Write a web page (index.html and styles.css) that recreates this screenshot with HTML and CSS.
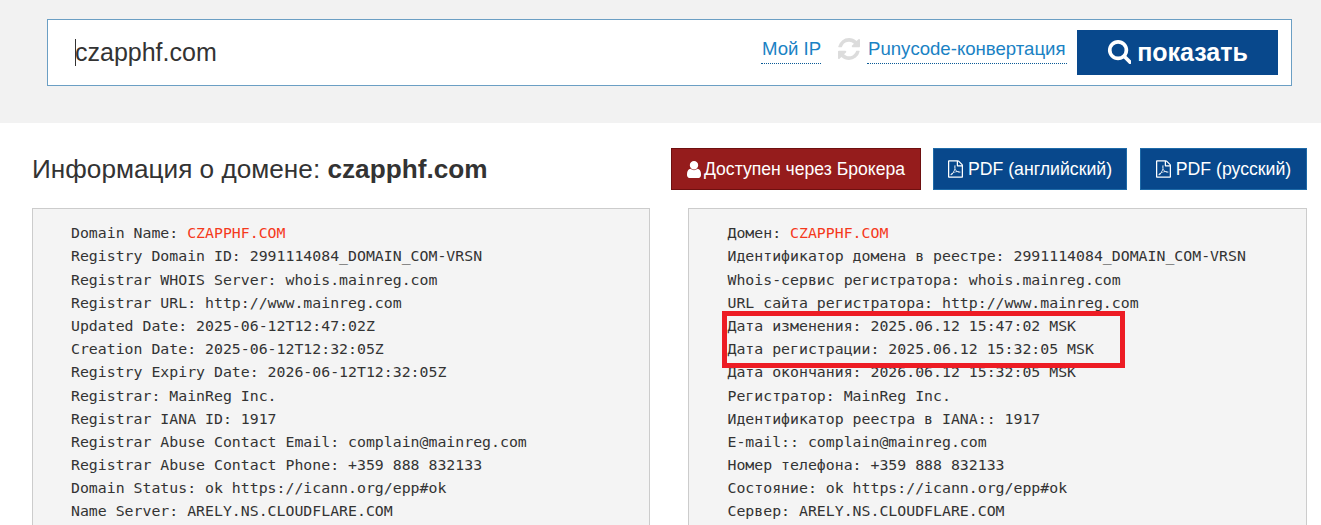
FILE: index.html
```html
<!DOCTYPE html>
<html lang="ru">
<head>
<meta charset="utf-8">
<title>Информация о домене</title>
<link rel="stylesheet" href="styles.css">
</head>
<body>
<header class="band">
  <form class="search">
    <div class="query"><span class="caret"></span>czapphf.com</div>
    <a class="tool myip">Мой IP</a>
    <svg class="refresh" viewBox="128 128 1536 1536" width="22" height="22" fill="#dcdcdc"><path d="M1639 1056q0 5-1 7-64 268-268 434.500t-478 166.500q-146 0-282.500-55t-243.500-157l-129 129q-19 19-45 19t-45-19-19-45v-448q0-26 19-45t45-19h448q26 0 45 19t19 45-19 45l-137 137q71 66 161 102t187 36q134 0 250-65t186-179q11-17 53-117 8-23 30-23h192q13 0 22.500 9.500t9.500 22.500zm25-800v448q0 26-19 45t-45 19h-448q-26 0-45-19t-19-45 19-45l138-138q-148-137-349-137-134 0-250 65t-186 179q-11 17-53 117-8 23-30 23h-199q-13 0-22.500-9.500t-9.500-22.500v-7q65-268 270-434.500t480-166.500q146 0 284 55.500t245 156.500l130-129q19-19 45-19t45 19 19 45z"/></svg>
    <a class="tool puny">Punycode-конвертация</a>
    <button class="show" type="button">
      <svg viewBox="0 128 1664 1664" width="24" height="24" fill="#fff"><path d="M1216 832q0-185-131.500-316.500t-316.500-131.500-316.500 131.500-131.500 316.500 131.500 316.500 316.500 131.500 316.500-131.500 131.500-316.500zm512 832q0 52-38 90t-90 38q-54 0-90-38l-343-342q-179 124-399 124-143 0-273.500-55.500t-225-150-150-225-55.500-273.500 55.500-273.500 150-225 225-150 273.500-55.500 273.500 55.500 225 150 150 225 55.500 273.500q0 220-124 399l343 343q37 37 37 90z"/></svg>
      показать
    </button>
  </form>
</header>
<main class="content">
  <div class="title-row">
    <h1 class="title">Информация о домене: <b>czapphf.com</b></h1>
    <div class="actions">
      <a class="btn broker">
        <svg class="btn-icon" viewBox="256 128 1280 1536" width="14" height="17" fill="#fff"><path d="M1536 1399q0 109-62.500 187t-150.500 78h-854q-88 0-150.500-78t-62.500-187q0-85 8.500-160.500t31.500-152 58.500-131 94-89 134.500-34.500q131 128 313 128t313-128q76 0 134.500 34.500t94 89 58.500 131 31.500 152 8.500 160.500zm-256-887q0 159-112.500 271.500t-271.500 112.500-271.500-112.500-112.500-271.500 112.500-271.500 271.500-112.500 271.500 112.500 112.500 271.500z"/></svg>
        Доступен через Брокера</a>
      <a class="btn pdf">
        <svg class="btn-icon" viewBox="128 0 1536 1792" width="15" height="18" fill="#fff"><path d="M1596 380q28 28 48 76t20 88v1152q0 40-28 68t-68 28h-1344q-40 0-68-28t-28-68v-1600q0-40 28-68t68-28h896q40 0 88 20t76 48zm-444-244v376h376q-10-29-22-41l-313-313q-12-12-41-22zm384 1528v-1024h-416q-40 0-68-28t-28-68v-416h-768v1536h1280zm-514-593q33 26 84 56 59-7 117-7 147 0 177 49 16 22 2 52 0 1-1 2l-2 2v1q-6 38-71 38-48 0-115-20t-130-53q-221 24-392 83-153 262-242 262-15 0-28-7l-24-12q-1-1-6-5-10-10-6-36 9-40 56-91.500t132-96.500q14-9 23 6 2 2 2 4 52-85 107-197 68-136 104-262-24-82-30.500-159.500t6.500-127.500q11-40 42-40h22q23 0 35 15 18 21 9 68-2 6-4 8 1 3 1 8v30q-2 123-14 192 55 164 146 238zm-576 411q52-24 137-158-51 40-87.500 84t-49.500 74zm398-920q-15 42-2 132 1-7 7-44 0-3 7-43 1-4 4-8-1-1-1-2-1-2-1-3-1-22-13-36 0 1-1 2v2zm-124 661q135-54 284-81-2-1-13-9.500t-16-13.500q-76-67-127-176-27 86-83 197-30 56-45 83zm646-16q-24-24-140-24 76 28 124 28 14 0 18-1 0-1-2-3z"/></svg>
        PDF (английский)</a>
      <a class="btn pdf">
        <svg class="btn-icon" viewBox="128 0 1536 1792" width="15" height="18" fill="#fff"><path d="M1596 380q28 28 48 76t20 88v1152q0 40-28 68t-68 28h-1344q-40 0-68-28t-28-68v-1600q0-40 28-68t68-28h896q40 0 88 20t76 48zm-444-244v376h376q-10-29-22-41l-313-313q-12-12-41-22zm384 1528v-1024h-416q-40 0-68-28t-28-68v-416h-768v1536h1280zm-514-593q33 26 84 56 59-7 117-7 147 0 177 49 16 22 2 52 0 1-1 2l-2 2v1q-6 38-71 38-48 0-115-20t-130-53q-221 24-392 83-153 262-242 262-15 0-28-7l-24-12q-1-1-6-5-10-10-6-36 9-40 56-91.500t132-96.500q14-9 23 6 2 2 2 4 52-85 107-197 68-136 104-262-24-82-30.500-159.500t6.500-127.500q11-40 42-40h22q23 0 35 15 18 21 9 68-2 6-4 8 1 3 1 8v30q-2 123-14 192 55 164 146 238zm-576 411q52-24 137-158-51 40-87.500 84t-49.500 74zm398-920q-15 42-2 132 1-7 7-44 0-3 7-43 1-4 4-8-1-1-1-2-1-2-1-3-1-22-13-36 0 1-1 2v2zm-124 661q135-54 284-81-2-1-13-9.500t-16-13.500q-76-67-127-176-27 86-83 197-30 56-45 83zm646-16q-24-24-140-24 76 28 124 28 14 0 18-1 0-1-2-3z"/></svg>
        PDF (русский)</a>
    </div>
  </div>
  <div class="panels">
<pre class="whois whois-en">Domain Name: <span class="hl">CZAPPHF.COM</span>
Registry Domain ID: 2991114084_DOMAIN_COM-VRSN
Registrar WHOIS Server: whois.mainreg.com
Registrar URL: http://www.mainreg.com
Updated Date: 2025-06-12T12:47:02Z
Creation Date: 2025-06-12T12:32:05Z
Registry Expiry Date: 2026-06-12T12:32:05Z
Registrar: MainReg Inc.
Registrar IANA ID: 1917
Registrar Abuse Contact Email: complain@mainreg.com
Registrar Abuse Contact Phone: +359 888 832133
Domain Status: ok https://icann.org/epp#ok
Name Server: ARELY.NS.CLOUDFLARE.COM</pre>
<pre class="whois whois-ru">Домен: <span class="hl">CZAPPHF.COM</span>
Идентификатор домена в реестре: 2991114084_DOMAIN_COM-VRSN
Whois-сервис регистратора: whois.mainreg.com
URL сайта регистратора: http://www.mainreg.com
Дата изменения: 2025.06.12 15:47:02 MSK
Дата регистрации: 2025.06.12 15:32:05 MSK
Дата окончания: 2026.06.12 15:32:05 MSK
Регистратор: MainReg Inc.
Идентификатор реестра в IANA:: 1917
E-mail:: complain@mainreg.com
Номер телефона: +359 888 832133
Состояние: ok https://icann.org/epp#ok
Сервер: ARELY.NS.CLOUDFLARE.COM<span class="mark"></span></pre>
  </div>
</main>
</body>
</html>
```
FILE: styles.css
```css
* { box-sizing: border-box; }
html, body { margin: 0; height: 525px; overflow: hidden; }
body { background: #fff; color: #333; font-family: "Liberation Sans", Arial, sans-serif; }
a { cursor: pointer; }

.band { height: 123px; background: #f2f2f2; padding: 19px 29px 0 47px; }
.search { display: flex; align-items: flex-start; height: 67px; background: #fff; border: 1px solid #6b9fc4; padding: 0 13px 0 27px; }
.query { position: relative; flex: 1; font-size: 25px; line-height: 65px; height: 65px; color: #333; }
.caret { position: absolute; left: 0; top: 19px; width: 1px; height: 27px; background: #333; }
.tool { margin-top: 16px; height: 28px; font-size: 18.6px; line-height: 26px; color: #1a82c4; border-bottom: 1px dotted #0a5a96; white-space: nowrap; }
.myip { width: 60px; padding-left: 1px; }
.puny { width: 200px; padding-left: 1px; }
.refresh { margin: 18px 7px 0 17px; flex: none; }
.show { display: flex; align-items: center; justify-content: center; gap: 6px; margin: 10px 0 0 10px; width: 201px; height: 45px; padding: 0 0 1px; border: 0; background: #08488c; color: #fff; font: bold 25px "Liberation Sans", Arial, sans-serif; }

.content { padding: 0 14px 0 32px; }
.title-row { display: flex; justify-content: space-between; align-items: flex-start; padding-top: 25px; height: 85px; }
.title { margin: 0; font-size: 26.2px; font-weight: 400; line-height: 42px; color: #333; }
.title b { font-weight: 700; }
.actions { display: flex; gap: 13px; }
.btn { display: flex; align-items: center; justify-content: center; gap: 3px; height: 42px; font-size: 17.6px; color: #fff; border: 1px solid #1e6aa8; background: #08488c; white-space: nowrap; }
.pdf { gap: 5px; font-size: 17.7px; }
.broker { width: 250px; margin-right: -1px; background: #951c1c; border-color: #6e1010; }
.pdf:nth-child(2) { width: 194px; }
.pdf:nth-child(3) { width: 167px; }
.btn-icon { flex: none; }

.panels { display: flex; justify-content: space-between; }
.whois { position: relative; margin: 0; height: 317px; padding: 13.3px 0 0 38px; background: #f4f4f4; border: 1px solid #ccc; border-bottom: 0; font-family: "DejaVu Sans Mono", "Liberation Mono", monospace; font-size: 14.85px; line-height: 23.170px; color: #333; overflow: hidden; }
.whois-en { width: 618px; }
.whois-ru { width: 619px; padding-left: 38.5px; }
.hl { color: #f4391c; }
.mark { position: absolute; left: 33px; top: 102px; width: 403px; height: 57px; border: 5px solid #ed1c24; }
```
